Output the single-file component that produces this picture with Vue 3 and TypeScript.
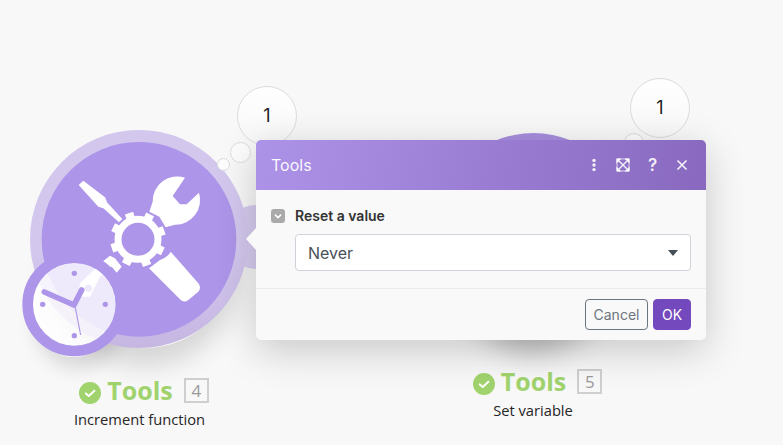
<script setup lang="ts">
const teeth: number[] = [0, 45, 90, 135, 180, 225, 270, 315].map((a) => a - 19)
</script>

<template>
  <div class="canvas">
    <div class="shadow shadow-one"></div>
    <div class="shadow shadow-clock"></div>
    <div class="shadow shadow-two"></div>
    <div class="disc-two"></div>

    <svg class="art" viewBox="0 0 840 900" width="280" height="300">
      <defs>
        <linearGradient id="halo" x1="0" y1="0" x2="0" y2="1">
          <stop offset="0.55" stop-color="#d3c7ee" />
          <stop offset="1" stop-color="#c5b6e2" />
        </linearGradient>
      </defs>
      <circle cx="768" cy="501" r="96" fill="#d6cbee" />
      <circle cx="417" cy="507" r="327" fill="url(#halo)" />
      <circle cx="417" cy="508" r="292" fill="#ad95e9" />
      <path d="M236 345 L250 332 L315 382 L322 398 L367 447 L357 457 L310 415 L295 410 Z" fill="#fff" />
      <path d="M555 323 A74 74 0 0 0 458 395 L448 425 L478 440 L497 472 L525 464 A74 74 0 0 0 597 368 L560 403 L540 403 L518 378 Z" fill="#fff" />
      <path d="M512 545 L595 640 Q605 652 595 665 L565 690 Q552 700 540 688 L447 595 L480 570 Q505 560 512 545 Z" fill="#fff" />
      <g transform="translate(414 508)">
        <circle r="72" fill="#ad95e9" />
        <g v-for="t in teeth" :key="t" :transform="`rotate(${t})`">
          <rect x="62" y="-15" width="23" height="30" fill="#fff" stroke="#ad95e9" stroke-width="4" />
        </g>
        <circle r="60" fill="none" stroke="#fff" stroke-width="21" />
      </g>
      <path d="M310 573 L330 557 L345 565 L365 590 L350 608 L335 590 L300 620 L270 680 L235 680 L240 640 Z" fill="#fff" />
      <circle cx="265" cy="655" r="11" fill="#ad95e9" />
      <circle cx="223" cy="703" r="125" fill="#fff" opacity="0.8" />
      <circle cx="223" cy="703" r="140" fill="none" stroke="#ad95e9" stroke-width="32" />
      <g fill="#ad95e9">
        <circle cx="223" cy="610" r="8" />
        <circle cx="128" cy="703" r="8" />
        <circle cx="316" cy="703" r="8" />
        <circle cx="223" cy="797" r="8" />
      </g>
      <path d="M133 666 L222 705 L245 660" fill="none" stroke="#ad95e9" stroke-width="17" stroke-linecap="round" stroke-linejoin="round" />
      <path d="M225 708 L242 795" fill="none" stroke="#ad95e9" stroke-width="3.5" />
    </svg>

    <span class="bubble bubble-big b1">1</span>
    <span class="bubble b1-mid"></span>
    <span class="bubble b1-small"></span>
    <span class="bubble bubble-big b2">1</span>
    <span class="bubble b2-mid"></span>

    <div class="node-label one">
      <div class="title-row">
        <svg class="check" viewBox="0 0 22 22" width="22" height="22">
          <circle cx="11" cy="11" r="11" fill="#a0d36d" />
          <path d="M6.8 11.4 L9.8 14 L15.4 8.8" fill="none" stroke="#fff" stroke-width="2" stroke-linecap="round" stroke-linejoin="round" />
        </svg>
        <span class="tools">Tools</span>
        <span class="num">4</span>
      </div>
      <div class="sub">Increment function</div>
    </div>

    <div class="node-label two">
      <div class="title-row">
        <svg class="check" viewBox="0 0 22 22" width="22" height="22">
          <circle cx="11" cy="11" r="11" fill="#a0d36d" />
          <path d="M6.8 11.4 L9.8 14 L15.4 8.8" fill="none" stroke="#fff" stroke-width="2" stroke-linecap="round" stroke-linejoin="round" />
        </svg>
        <span class="tools">Tools</span>
        <span class="num">5</span>
      </div>
      <div class="sub">Set variable</div>
    </div>

    <section class="dialog">
      <header class="head">
        <span class="head-title">Tools</span>
        <div class="head-icons">
          <svg viewBox="0 0 4 14" width="4" height="14"><g fill="#fff" opacity=".9"><circle cx="2" cy="2.4" r="1.7" /><circle cx="2" cy="7" r="1.7" /><circle cx="2" cy="11.6" r="1.7" /></g></svg>
          <svg viewBox="0 0 14 14" width="14" height="14">
            <path d="M1 1 H13 V13 H1 Z" fill="none" stroke="#fff" stroke-opacity=".7" stroke-width="1" />
            <path d="M3 3 L11 11 M11 3 L3 11" stroke="#fff" stroke-opacity=".9" stroke-width="1.4" />
            <path d="M0.5 0.5 H5.5 L0.5 5.5 Z M13.5 0.5 V5.5 L8.5 0.5 Z M0.5 13.5 V8.5 L5.5 13.5 Z M13.5 13.5 H8.5 L13.5 8.5 Z" fill="#fff" />
          </svg>
          <span class="q">?</span>
          <svg viewBox="0 0 12 12" width="12" height="12"><path d="M1.5 1.5 L10.5 10.5 M10.5 1.5 L1.5 10.5" stroke="#fff" stroke-opacity=".9" stroke-width="1.7" /></svg>
        </div>
      </header>
      <div class="body">
        <div class="field-label">
          <span class="box">
            <svg viewBox="0 0 14 14" width="14" height="14"><path d="M4 5.6 L7 8.6 L10 5.6" fill="none" stroke="#fff" stroke-width="1.5" /></svg>
          </span>
          <span>Reset a value</span>
        </div>
        <div class="select">
          <span>Never</span>
          <i class="caret"></i>
        </div>
      </div>
      <footer class="foot">
        <button class="btn cancel">Cancel</button>
        <button class="btn ok">OK</button>
      </footer>
    </section>
  </div>
</template>

<style>
html, body { margin: 0; background: #f8f8f8; }
</style>

<style scoped>
.canvas {
  position: relative;
  width: 783px;
  height: 445px;
  overflow: hidden;
  background: #f8f8f8;
  font-family: "Open Sans", "Noto Sans", sans-serif;
}
.art { position: absolute; left: 0; top: 70px; }
.shadow { position: absolute; border-radius: 50%; }
.shadow-one {
  left: 50px; top: 150px; width: 190px; height: 198px;
  box-shadow: 0 18px 26px rgba(0, 0, 0, 0.14);
}
.shadow-clock {
  left: 30px; top: 262px; width: 88px; height: 95px;
  box-shadow: 4px 12px 18px rgba(0, 0, 0, 0.12);
}
.shadow-two {
  left: 456px; top: 150px; width: 154px; height: 180px;
  box-shadow: 0 22px 28px rgba(0, 0, 0, 0.24);
}
.disc-two {
  position: absolute; left: 435px; top: 133px; width: 197px; height: 197px;
  border-radius: 50%; background: #a78edf;
}
.bubble {
  position: absolute; box-sizing: border-box; border-radius: 50%;
  background: #fdfdfd; border: 1.5px solid #dcdcdc;
}
.bubble-big {
  width: 60px; height: 60px; padding-bottom: 2px; display: flex; align-items: center; justify-content: center;
  font: 400 18px "Inter", sans-serif; color: #222;
  background: linear-gradient(#fff, #f8f8f8);
}
.b1 { left: 237px; top: 86px; }
.b1-mid { left: 230px; top: 142px; width: 21px; height: 21px; }
.b1-small { left: 217px; top: 158px; width: 13px; height: 13px; }
.b2 { left: 630px; top: 78px; }
.b2-mid { left: 624px; top: 133px; width: 20px; height: 20px; }

.node-label { position: absolute; display: flex; flex-direction: column; align-items: center; width: 240px; }
.node-label.one { left: 19.5px; top: 374px; }
.node-label.two { left: 413px; top: 365px; }
.title-row { display: flex; align-items: center; margin-left: 9px; height: 32px; }
.check { margin-top: 6px; }
.tools {
  margin-left: 6px; font-weight: 700; font-size: 25px; line-height: 32px;
  color: #a0d36d;
}
.num {
  margin-left: 11px; box-sizing: border-box; width: 25px; height: 25px; margin-top: 1px;
  display: flex; align-items: center; justify-content: center;
  border: 2px solid #cfcfcf; color: #9b9b9b; font-size: 17px;
}
.sub { margin-top: 3px; font-size: 14.7px; line-height: 20px; color: #262626; }

.dialog {
  position: absolute; left: 256px; top: 140px; width: 450px; height: 200px;
  display: flex; flex-direction: column; box-sizing: border-box;
  background: #f9f9f9; border-radius: 5px;
  box-shadow: 0 10px 40px rgba(0, 0, 0, 0.2);
  font-family: "Inter", sans-serif;
}
.dialog::before {
  content: ""; position: absolute; left: -10px; top: 88px;
  border-top: 11px solid transparent; border-bottom: 11px solid transparent;
  border-right: 10px solid #f9f9f9;
}
.head {
  height: 50px; flex: none; display: flex; align-items: center; justify-content: space-between;
  padding: 0 18px 0 15px; border-radius: 5px 5px 0 0;
  background: linear-gradient(100deg, #ad93e8 0%, #8869bf 100%);
  color: #fff;
}
.head-title { font-size: 16px; color: rgba(255, 255, 255, 0.95); }
.head-icons { display: flex; align-items: center; gap: 0; }
.head-icons > :nth-child(1) { margin-right: 20px; }
.head-icons > :nth-child(2) { margin-right: 18px; }
.q { font-size: 17px; font-weight: 600; line-height: 20px; width: 10px; margin-right: 18px; color: rgba(255,255,255,.9); }
.body { flex: 1; padding: 18px 15px 0; }
.field-label {
  display: flex; align-items: center; gap: 10px;
  font-size: 14px; font-weight: 600; color: #333; line-height: 16px;
}
.box { width: 14px; height: 14px; background: #aaa; border-radius: 3px; display: flex; }
.select {
  margin: 10px 0 0 24px; height: 37px; box-sizing: border-box; padding: 0 12px;
  display: flex; align-items: center; justify-content: space-between;
  background: #fff; border: 1px solid #ced4da; border-radius: 4px;
  font-size: 16px; color: #495057;
}
.caret {
  width: 0; height: 0; border-left: 5.5px solid transparent; border-right: 5.5px solid transparent;
  border-top: 6px solid #454d55;
}
.foot {
  height: 52px; flex: none; box-sizing: border-box; padding-right: 15px; padding-top: 10px;
  display: flex; justify-content: flex-end; align-items: flex-start; gap: 5px;
  border-top: 1px solid #ebebeb;
}
.btn {
  box-sizing: border-box; height: 31px; border-radius: 4px; font: 400 14px "Inter", sans-serif; padding: 0;
}
.cancel { width: 63px; background: transparent; border: 1px solid #6c757d; color: #6c757d; }
.ok { width: 38px; background: #7549be; border: 1px solid #7549be; color: #fff; }
</style>
